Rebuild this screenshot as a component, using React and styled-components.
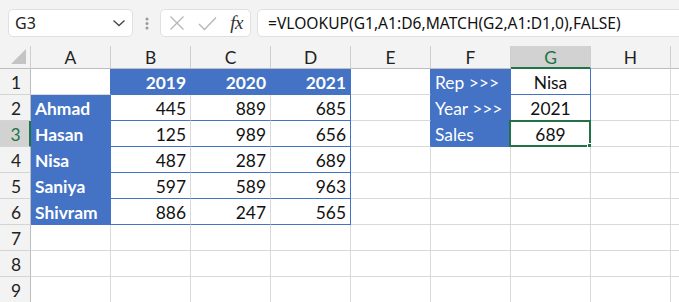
import React from "react";
import styled, { createGlobalStyle } from "styled-components";

const Global = createGlobalStyle`
  html, body { margin: 0; padding: 0; background: #ffffff; overflow: hidden; }
  body { width: 679px; height: 302px; }
  * { box-sizing: border-box; }
`;

const BLUE = "#4472c4";
const GRID = "#d9d9d9";
const GREEN = "#217346";

const Page = styled.div`
  width: 679px;
  height: 302px;
  overflow: hidden;
  background: #ffffff;
  display: flex;
  flex-direction: column;
`;

const TopBar = styled.div`
  height: 46px;
  flex: none;
  background: #f3f3f3;
  display: flex;
  align-items: flex-start;
  padding: 9px 0 0 8px;
`;

const Box = styled.div`
  height: 28px;
  background: #ffffff;
  border: 1px solid #e0e0e0;
  border-radius: 5px;
  display: flex;
  align-items: center;
`;

const NameBox = styled(Box)`
  width: 125px;
  justify-content: space-between;
  padding: 0 6px 0 6px;
  font-family: "Noto Sans", "Open Sans", sans-serif;
  font-size: 16px;
  color: #222;
`;

const Dots = styled.div`
  width: 27px;
  display: flex;
  justify-content: center;
  padding-top: 8px;
`;

const FxBox = styled(Box)`
  width: 91px;
  padding: 0 6px 0 8px;
  justify-content: space-between;
`;

const Fx = styled.span`
  font-family: "Liberation Serif", "DejaVu Serif", serif;
  font-style: italic;
  font-size: 19px;
  color: #333;
  letter-spacing: -0.5px;
  margin-right: 1px;
`;

const FormulaBox = styled(Box)`
  margin-left: 6px;
  flex: 1;
  margin-right: -20px;
  padding-left: 10px;
  font-family: "Noto Sans", "Open Sans", sans-serif;
  font-size: 15.6px;
  color: #111;
  white-space: nowrap;
`;

const Sheet = styled.div`
  display: grid;
  grid-template-columns: 31px repeat(8, 80px) 80px;
  grid-template-rows: 23px repeat(9, 26px);
  font-family: Lato, "Open Sans", sans-serif;
  font-size: 17.4px;
`;

const ColHead = styled.div`
  background: ${(p) => (p.$sel ? "#d2d2d2" : "#f3f3f3")};
  color: ${(p) => (p.$sel ? GREEN : "#222")};
  border-right: 1px solid #cfcfcf;
  border-bottom: ${(p) => (p.$sel ? `2px solid ${GREEN}` : "1px solid #bdbdbd")};
  display: flex;
  align-items: center;
  justify-content: center;
  padding-top: ${(p) => (p.$sel ? "1px" : "0")};
`;

const Corner = styled.div`
  background: #f3f3f3;
  border-right: 1px solid #cfcfcf;
  border-bottom: 1px solid #bdbdbd;
  display: flex;
  align-items: flex-end;
  justify-content: flex-end;
  padding: 0 4px 4px 0;
`;

const RowHead = styled.div`
  background: ${(p) => (p.$sel ? "#d2d2d2" : "#f3f3f3")};
  color: ${(p) => (p.$sel ? GREEN : "#222")};
  border-right: ${(p) => (p.$sel ? `2px solid ${GREEN}` : "1px solid #bdbdbd")};
  border-bottom: 1px solid #d4d4d4;
  display: flex;
  align-items: center;
  justify-content: center;
  padding-left: 2px;
  padding-top: 1px;
`;

const Cell = styled.div`
  position: relative;
  background: ${(p) => (p.$blue ? BLUE : "#ffffff")};
  color: ${(p) => (p.$blue ? "#ffffff" : "#111")};
  font-weight: ${(p) => (p.$bold ? 700 : 400)};
  border-right: 1px solid ${(p) => p.$rb || (p.$blue ? BLUE : GRID)};
  border-bottom: 1px solid ${(p) => p.$bb || (p.$blue ? BLUE : GRID)};
  display: flex;
  align-items: center;
  justify-content: ${(p) =>
    p.$align === "right" ? "flex-end" : p.$align === "center" ? "center" : "flex-start"};
  padding: 1px 4px 0 4px;
  white-space: nowrap;
`;

const Selection = styled.div`
  position: absolute;
  left: -2px;
  top: -1px;
  right: -1px;
  bottom: -1px;
  border: 2px solid ${GREEN};
  pointer-events: none;
`;

const Handle = styled.div`
  position: absolute;
  right: -4px;
  bottom: -4px;
  width: 6px;
  height: 6px;
  background: ${GREEN};
  border: 1px solid #ffffff;
`;

const Chevron = () => (
  <svg width="14" height="8" viewBox="0 0 14 8">
    <path d="M1.5 1.5 L7 6.5 L12.5 1.5" fill="none" stroke="#444" strokeWidth="1.3" />
  </svg>
);

const VDots = () => (
  <svg width="4" height="13" viewBox="0 0 4 13">
    <circle cx="2" cy="2" r="1.5" fill="#9a9a9a" />
    <circle cx="2" cy="6.5" r="1.5" fill="#9a9a9a" />
    <circle cx="2" cy="11" r="1.5" fill="#9a9a9a" />
  </svg>
);

const CrossIcon = () => (
  <svg width="16" height="16" viewBox="0 0 16 16">
    <path d="M1.5 1.5 L14.5 14.5 M14.5 1.5 L1.5 14.5" stroke="#b5b5b5" strokeWidth="1.3" fill="none" />
  </svg>
);

const CheckIcon = () => (
  <svg width="19" height="15" viewBox="0 0 19 15">
    <path d="M1 8 L6.5 13.5 L18 1.5" stroke="#b5b5b5" strokeWidth="1.3" fill="none" />
  </svg>
);

const CornerTri = () => (
  <svg width="15" height="15" viewBox="0 0 15 15">
    <path d="M15 0 L15 15 L0 15 Z" fill="#c4c4c4" />
  </svg>
);

const IconGroup = styled.div`
  display: flex;
  align-items: center;
  gap: 13px;
`;

const cols = ["A", "B", "C", "D", "E", "F", "G", "H", ""];

const tbl = (v, extra = {}) => ({ v, align: "right", bb: BLUE, ...extra });
const name = (v) => ({ v, blue: true, bold: true });
const year = (v) => ({ v, blue: true, bold: true, align: "right" });
const empty = () => ({});

const data = [
  [
    { v: "", rb: BLUE },
    year("2019"),
    year("2020"),
    year("2021"),
    { v: "", rb: BLUE },
    { v: "Rep >>>", blue: true },
    { v: "Nisa", align: "center", rb: BLUE, bb: BLUE },
    empty(),
    empty(),
  ],
  [name("Ahmad"), tbl("445"), tbl("889"), tbl("685", { rb: BLUE }), { rb: BLUE }, { v: "Year >>>", blue: true }, { v: "2021", align: "center", rb: BLUE, bb: BLUE }, empty(), empty()],
  [name("Hasan"), tbl("125"), tbl("989"), tbl("656", { rb: BLUE }), { rb: BLUE }, { v: "Sales", blue: true }, { v: "689", align: "center", sel: true }, empty(), empty()],
  [name("Nisa"), tbl("487"), tbl("287"), tbl("689", { rb: BLUE }), empty(), empty(), empty(), empty(), empty()],
  [name("Saniya"), tbl("597"), tbl("589"), tbl("963", { rb: BLUE }), empty(), empty(), empty(), empty(), empty()],
  [name("Shivram"), tbl("886"), tbl("247"), tbl("565", { rb: BLUE }), empty(), empty(), empty(), empty(), empty()],
  Array.from({ length: 9 }, empty),
  Array.from({ length: 9 }, empty),
  Array.from({ length: 9 }, empty),
];

export default function App() {
  return (
    <Page>
      <Global />
      <TopBar>
        <NameBox>
          <span>G3</span>
          <Chevron />
        </NameBox>
        <Dots>
          <VDots />
        </Dots>
        <FxBox>
          <IconGroup>
            <CrossIcon />
            <CheckIcon />
          </IconGroup>
          <Fx>fx</Fx>
        </FxBox>
        <FormulaBox>=VLOOKUP(G1,A1:D6,MATCH(G2,A1:D1,0),FALSE)</FormulaBox>
      </TopBar>
      <Sheet>
        <Corner>
          <CornerTri />
        </Corner>
        {cols.map((c, i) => (
          <ColHead key={i} $sel={c === "G"}>
            {c}
          </ColHead>
        ))}
        {data.map((row, ri) => (
          <React.Fragment key={ri}>
            <RowHead $sel={ri === 2}>{ri + 1}</RowHead>
            {row.map((cell, ci) => (
              <Cell
                key={ci}
                $blue={cell.blue}
                $bold={cell.bold}
                $align={cell.align}
                $rb={cell.rb}
                $bb={cell.bb}
              >
                {cell.v}
                {cell.sel && (
                  <Selection>
                    <Handle />
                  </Selection>
                )}
              </Cell>
            ))}
          </React.Fragment>
        ))}
      </Sheet>
    </Page>
  );
}
